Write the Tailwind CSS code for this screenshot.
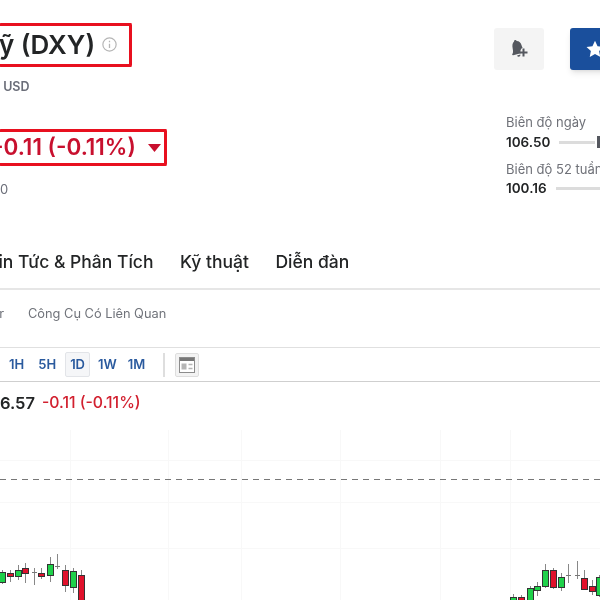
<!DOCTYPE html>
<html lang="vi">
<head>
  <meta charset="UTF-8">
  <title>DXY</title>
  <script src="https://cdn.jsdelivr.net/npm/@tailwindcss/browser@4"></script>
</head>
<body class="bg-white overflow-hidden font-['Inter',sans-serif] text-[#232526]">
  <div class="w-[600px] h-[600px] overflow-hidden flex flex-col blur-[0.4px]">

    <!-- Header -->
    <div class="h-[129px] shrink-0 flex justify-between items-start pt-[23px]">
      <div>
        <div class="h-[44px] w-[133px] ml-[-1px] border-[3px] border-l-0 border-[#e8101f] rounded-[2px] flex items-center">
          <h1 class="text-[26px] leading-none font-semibold whitespace-nowrap">ỹ (DXY)</h1>
          <svg class="ml-[7px] mt-[-1px]" width="15" height="15" viewBox="0 0 14 14" fill="none">
            <circle cx="7" cy="7" r="6.2" stroke="#b5b5b5" stroke-width="1.1"/>
            <path d="M7 6.2v4M7 3.6v1.2" stroke="#b5b5b5" stroke-width="1.2"/>
          </svg>
        </div>
        <div class="mt-[12px] text-[12.5px] leading-4 font-semibold text-[#6a6d78]">&nbsp;USD</div>
      </div>
      <div class="flex gap-[26px] pt-[5px] mr-[-30px]">
        <button class="w-[50px] h-[42px] bg-[#f4f4f4] rounded-[3px] flex items-center justify-center">
          <svg width="20" height="20" viewBox="0 0 20 20" fill="#55585f">
            <g transform="rotate(-14 8 9)">
              <path d="M8 .8c.8 0 1.300.5 1.400 1.300 2.500.7 3.600 2.800 3.700 5.300 0 1 .1 1.900.4 2.600a4.500 4.500 0 0 0-3 5H2.500c-.8 0-1-.8-.5-1.200 1-1 1.600-2.400 1.700-5.400.1-3 1.200-5.600 3-6.300.1-.8.600-1.300 1.300-1.300z"/>
              <path d="M6.300 16.200h3.400a1.700 1.700 0 0 1-3.400 0z"/>
            </g>
            <path d="M14.500 9.500v8M10.500 13.500h8" stroke="#55585f" stroke-width="2" fill="none"/>
          </svg>
        </button>
        <button class="w-[60px] h-[42px] bg-[#1a4f9c] rounded-[3px] shadow-md pr-[10px] flex items-center justify-center">
          <svg width="18" height="18" viewBox="0 0 24 24" fill="#fff">
            <path d="M12 1l3.400 7.300 7.900 1-5.800 5.400 1.500 7.900L12 18.700l-7 3.900 1.500-7.900L.7 9.300l7.900-1z"/>
          </svg>
        </button>
      </div>
    </div>

    <!-- Price + ranges -->
    <div class="h-[110px] shrink-0 flex justify-between items-start">
      <div>
        <div class="h-[37px] w-[168px] ml-[-1px] border-[3px] border-l-0 border-[#e8101f] rounded-[2px] flex items-center overflow-hidden">
          <span class="ml-[-6px] text-[22.5px] leading-none font-semibold text-[#c8102e] whitespace-nowrap">-0.11 (-0.11%)</span>
          <svg class="ml-[12px]" width="13" height="8" viewBox="0 0 13 8"><path d="M0 0h13L6.500 8z" fill="#c8102e"/></svg>
        </div>
        <div class="mt-[15px] text-[13px] leading-4 text-[#6a6d78]">0</div>
      </div>
      <div class="w-[94px] mt-[-15px] text-[13px] overflow-hidden">
        <div class="leading-4 text-[#6f7178] whitespace-nowrap">Biên độ ngày</div>
        <div class="mt-[4px] h-4 flex items-center gap-[9px]">
          <span class="text-[13.5px] font-semibold leading-4">106.50</span>
          <span class="w-[36px] h-[3px] bg-[#dcdcdc] shrink-0"></span>
          <span class="w-[4px] h-[12px] bg-[#55585f] shrink-0 ml-[-7px]"></span>
        </div>
        <div class="mt-[11px] leading-4 text-[#6f7178] whitespace-nowrap">Biên độ 52 tuần</div>
        <div class="mt-[3px] h-4 flex items-center gap-[9px]">
          <span class="text-[13.5px] font-semibold leading-4">100.16</span>
          <span class="w-[50px] h-[3px] bg-[#dcdcdc] shrink-0"></span>
        </div>
      </div>
    </div>

    <!-- Main tabs -->
    <div class="h-[51px] shrink-0 border-b-2 border-[#e6e6e6] flex items-start gap-[26.500px] text-[17.500px] leading-6 font-medium whitespace-nowrap ml-[-13px] pt-[11px]">
      <span>Tin Tức &amp; Phân Tích</span>
      <span>Kỹ thuật</span>
      <span>Diễn đàn</span>
    </div>

    <!-- Sub tabs -->
    <div class="h-[58px] shrink-0 border-b border-[#e0e0e0] flex items-start gap-[24px] pt-[14px] text-[12.800px] leading-5 text-[#70737a] whitespace-nowrap">
      <span class="w-[4px] overflow-hidden flex justify-end"><span>r</span></span>
      <span>Công Cụ Có Liên Quan</span>
    </div>

    <!-- Chart toolbar -->
    <div class="h-[34px] shrink-0 border-b border-[#cfcfcf] flex items-center text-[13px] font-semibold text-[#2a5a9e]">
      <span class="ml-[9px]">1H</span>
      <span class="ml-[14px]">5H</span>
      <span class="ml-[9px] w-[25px] h-[25px] bg-[#f5f6f8] border border-[#e2e4e8] rounded-[2px] flex items-center justify-center">1D</span>
      <span class="ml-[8px]">1W</span>
      <span class="ml-[11px]">1M</span>
      <span class="ml-[18px] w-[2px] h-[24px] bg-[#dedede]"></span>
      <span class="ml-[10px] w-[24px] h-[24px] bg-[#f3f3f3] border border-[#dedede] rounded-[2px] flex items-center justify-center">
        <svg width="16" height="16" viewBox="0 0 16 16">
          <rect x="0.500" y="0.500" width="15" height="15" fill="#fff" stroke="#8c8c8c"/>
          <rect x="1" y="1" width="14" height="3" fill="#777"/>
          <rect x="2.500" y="6.500" width="5" height="6" fill="#b5b5b5"/>
          <path d="M9.500 7.500h4M9.500 11.500h4" stroke="#b5b5b5" stroke-width="1.500"/>
        </svg>
      </span>
    </div>

    <!-- Chart legend -->
    <div class="h-[42px] shrink-0 flex items-center whitespace-nowrap ml-[-11px]">
      <span class="text-[16.500px] font-semibold">06.57</span>
      <span class="ml-[7px] text-[15.800px] font-medium text-[#d2202f]">-0.11 (-0.11%)</span>
    </div>

    <!-- Chart: y in the svg = page y -->
    <svg class="shrink-0 block" width="600" height="176" viewBox="0 424 600 176">
      <g stroke="#f8f8f8" stroke-width="1">
        <path d="M70.500 430V600M168.500 430V600M241.500 430V600M340.500 430V600M440.500 430V600M510.500 430V600"/>
        <path d="M0 460.500H600M0 502.500H600M0 548.500H600"/>
      </g>
      <path d="M0 479.500H600" stroke="#777" stroke-width="1.200" stroke-dasharray="6 5"/>
      <g id="candles" stroke-width="1"></g>
    </svg>
  </div>

  <script>
    // x, wick top, wick bottom, body top, body bottom, kind
    const candles = [
      [2, 570, 584, 572, 582, 'g'], [10, 570, 582, 573, 576, 'r'], [18, 565, 580, 570, 576, 'g'],
      [25, 563, 583, 568, 573, 'r'], [34, 568, 585, 572, 573, 'd'], [41, 568, 579, 573, 576, 'r'],
      [50, 557, 582, 564, 575, 'g'], [57, 554, 569, 566, 567, 'd'], [65, 565, 592, 570, 585, 'r'],
      [73, 568, 593, 571, 587, 'g'], [81, 570, 600, 575, 600, 'r'],
      [513, 594, 600, 597, 600, 'g'], [521, 595, 600, 597, 600, 'r'], [530, 586, 600, 588, 600, 'g'],
      [537, 582, 596, 586, 590, 'g'], [545, 564, 588, 570, 586, 'g'], [553, 568, 589, 570, 587, 'r'],
      [561, 573, 591, 577, 587, 'g'], [568, 564, 583, 575, 576, 'd'], [577, 561, 579, 575, 576, 'd'],
      [584, 570, 590, 578, 589, 'r'], [592, 580, 595, 586, 591, 'r'], [599, 575, 597, 577, 595, 'g']
    ];
    const fills = { g: '#1fd14a', r: '#e0112b', d: '#777' };
    let out = '';
    candles.forEach(([x, wt, wb, bt, bb, k]) => {
      out += `<path d="M${x + .5} ${wt}V${wb}" stroke="#888"/>`;
      if (k === 'd') out += `<path d="M${x - 2} ${bt + .5}H${x + 3}" stroke="#777"/>`;
      else out += `<rect x="${x - 2.5}" y="${bt + .5}" width="6" height="${bb - bt}" fill="${fills[k]}" stroke="#333"/>`;
    });
    document.getElementById('candles').innerHTML = out;
  </script>
</body>
</html>
